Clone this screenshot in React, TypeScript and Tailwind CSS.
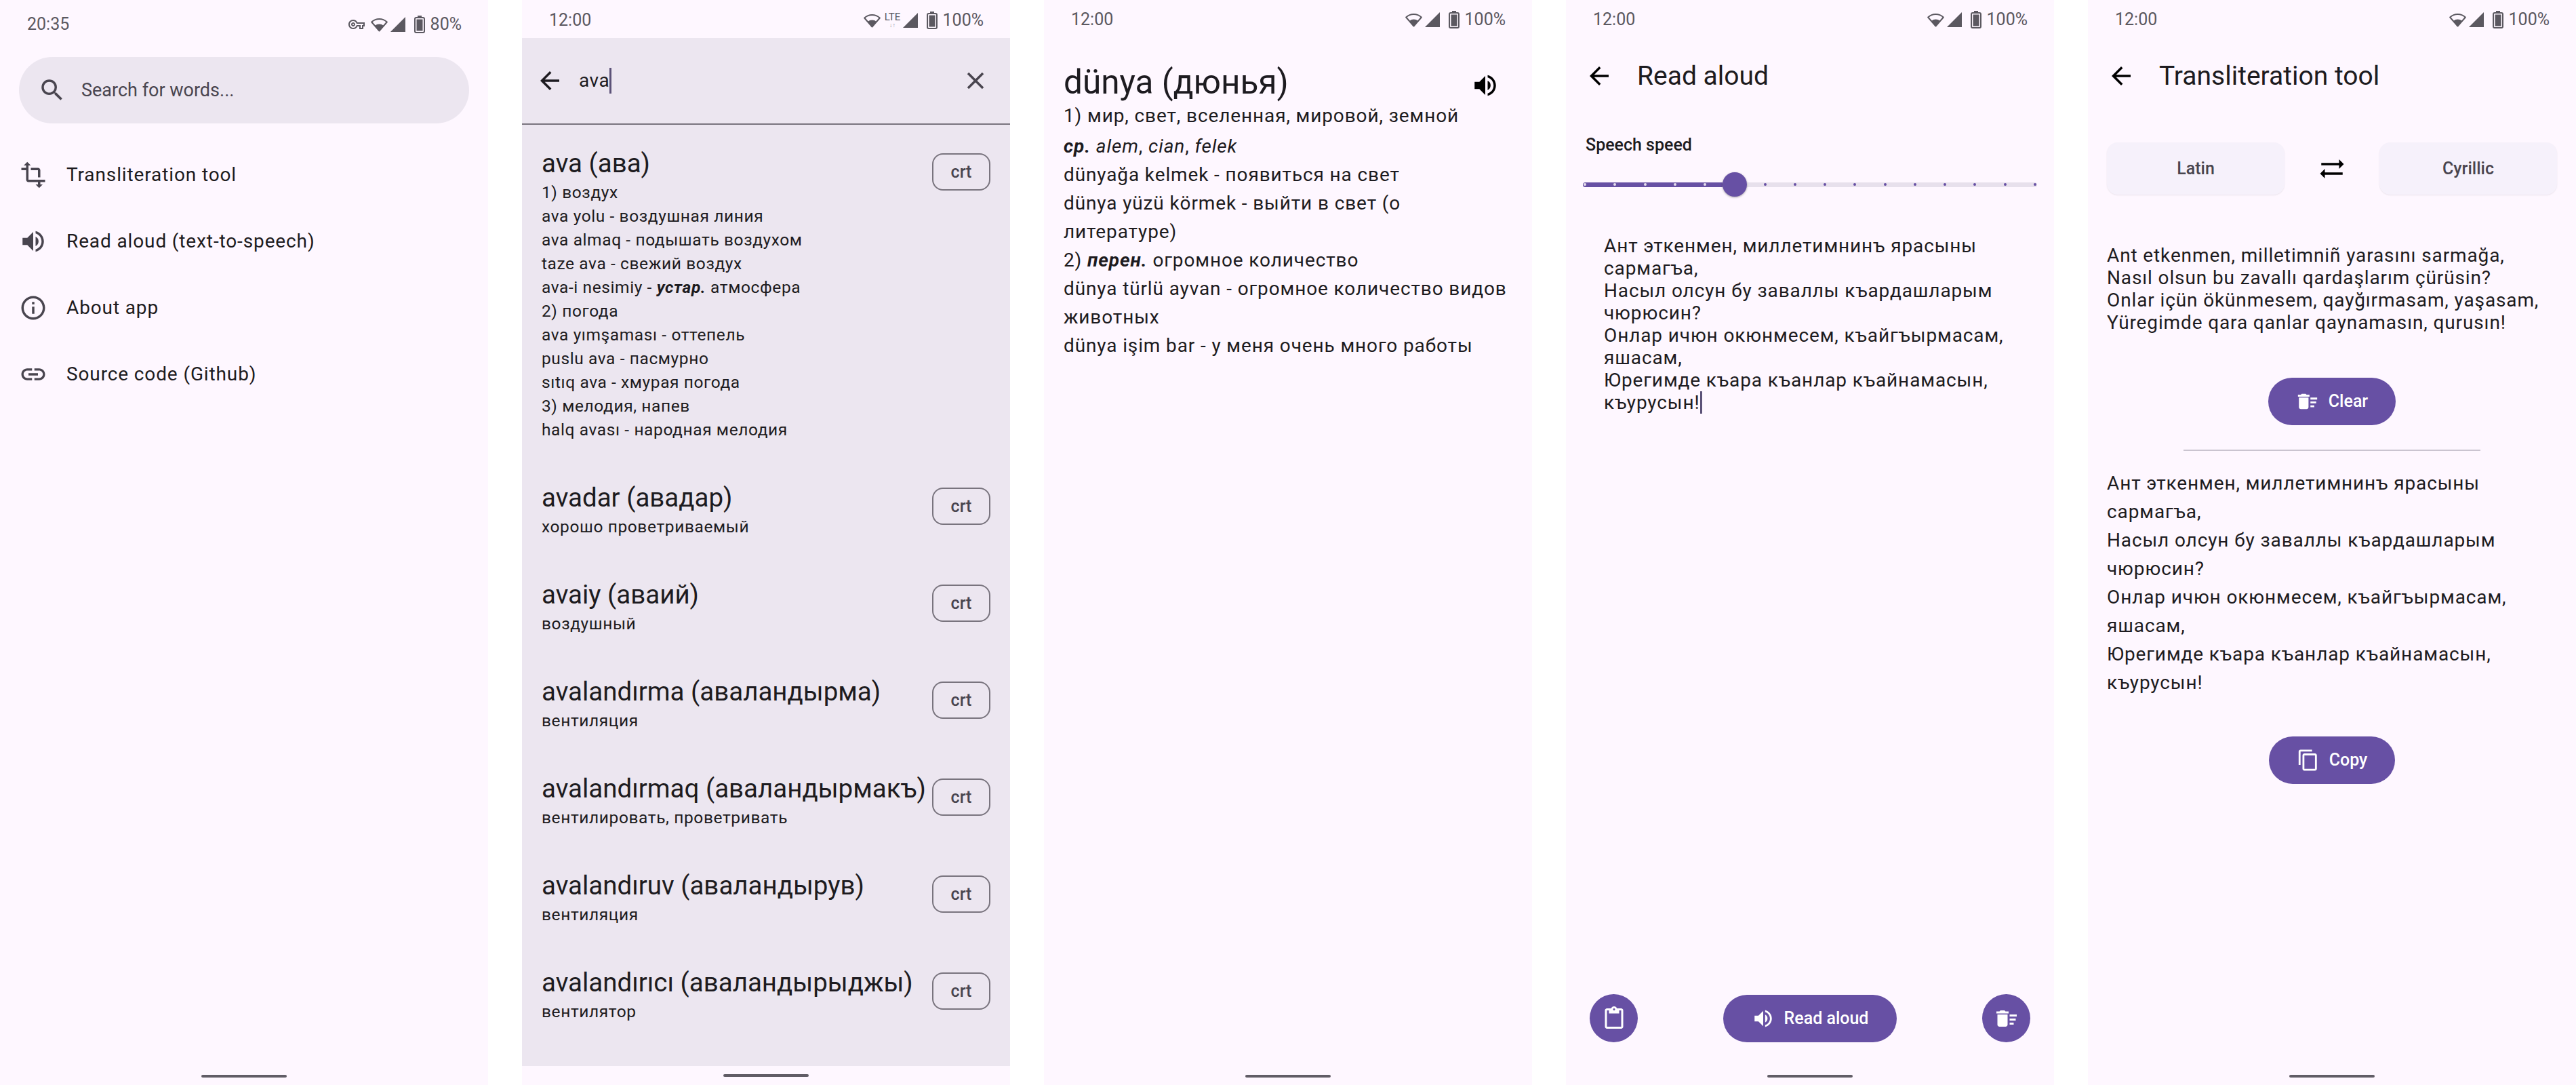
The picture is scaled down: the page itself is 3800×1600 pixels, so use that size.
import React, { ReactNode } from 'react';
import {
  MdArrowBack,
  MdClose,
  MdContentCopy,
  MdDeleteSweep,
  MdInfoOutline,
  MdLink,
  MdOutlineContentPaste,
  MdOutlineVpnKey,
  MdSearch,
  MdSyncAlt,
  MdTransform,
  MdVolumeUp,
} from 'react-icons/md';

function WifiIcon() {
  return (
    <svg width="25" height="22" viewBox="0 0 25 22" fill="none">
      <path d="M12.5 20.5 1.2 7.5a16.5 16.5 0 0 1 22.6 0Z" stroke="currentColor" strokeWidth="2" strokeLinejoin="round" />
      <path d="M12.5 20.5 6 13a10 10 0 0 1 13 0Z" fill="currentColor" />
    </svg>
  );
}

function SignalIcon() {
  return (
    <svg width="22" height="22" viewBox="0 0 22 22">
      <path d="M22 0v22H0Z" fill="currentColor" />
    </svg>
  );
}

function BatteryIcon() {
  return (
    <svg width="16" height="26" viewBox="0 0 16 26" fill="none">
      <path d="M5 0h6v2.5H5Z" fill="currentColor" />
      <rect x="1" y="3" width="14" height="22" rx="2" stroke="currentColor" strokeWidth="2" />
      <rect x="3.5" y="5.5" width="9" height="17" fill="currentColor" />
    </svg>
  );
}

function StatusBar({ time, battery, height, vpn, lte }: { time: string; battery: string; height: string; vpn?: boolean; lte?: boolean }) {
  return (
    <div className={`flex shrink-0 items-center justify-between bg-[#fef7ff] pl-[40px] pr-[39px] text-[25px] text-[#5b5860] ${height}`}>
      <span>{time}</span>
      <div className="flex items-center">
        {vpn && <MdOutlineVpnKey className="mr-[9px] text-[24px]" />}
        <WifiIcon />
        {lte && (
          <div className="ml-[5px] -mr-[2px] flex w-[26px] flex-col items-center text-[15px] leading-[15px]">
            <span>LTE</span>
            <span className="text-[9px] leading-[8px] text-[#9a979f]">↓↑</span>
          </div>
        )}
        <span className="ml-[4px] flex">
          <SignalIcon />
        </span>
        <span className="ml-[13px] flex">
          <BatteryIcon />
        </span>
        <span className="ml-[8px]">{battery}</span>
      </div>
    </div>
  );
}

function HomeBar({ height }: { height: string }) {
  return (
    <div className={`flex shrink-0 items-center justify-center ${height}`}>
      <div className="h-[4px] w-[126px] rounded-full bg-[#615d66]" />
    </div>
  );
}

function MenuRow({ icon, label }: { icon: ReactNode; label: string }) {
  return (
    <div className="flex h-[98px] items-center pl-[28px] text-[28px] tracking-[0.875px] text-[#1d1b20]">
      <span className="flex w-[70px] text-[42px] text-[#49454f]">{icon}</span>
      {label}
    </div>
  );
}

function HomeScreen() {
  return (
    <div className="flex h-full w-[720px] shrink-0 flex-col bg-[#fef7ff]">
      <StatusBar time="20:35" battery="80%" height="h-[72px]" vpn />
      <div className="mx-[28px] mt-[12px] flex h-[98px] items-center rounded-full bg-[#ece6f0] pl-[28px] text-[#49454f]">
        <MdSearch className="text-[42px]" />
        <span className="ml-[22px] text-[27px]">Search for words...</span>
      </div>
      <div className="mt-[27px] flex flex-col">
        <MenuRow icon={<MdTransform />} label="Transliteration tool" />
        <MenuRow icon={<MdVolumeUp />} label="Read aloud (text-to-speech)" />
        <MenuRow icon={<MdInfoOutline />} label="About app" />
        <MenuRow icon={<MdLink />} label="Source code (Github)" />
      </div>
      <div className="flex-1" />
      <HomeBar height="h-[26px]" />
    </div>
  );
}

function ResultItem({ word, lines }: { word: string; lines: ReactNode[] }) {
  return (
    <div className="flex px-[29px] py-[29px]">
      <div className="min-w-0 flex-1 whitespace-nowrap text-[#1d1b20]">
        <div className="text-[38.5px] leading-[50px]">{word}</div>
        {lines.map((line, i) => (
          <div key={i} className="text-[24.5px] leading-[35px] tracking-[0.6px]">
            {line}
          </div>
        ))}
      </div>
      <div className="mt-[10px] flex h-[55px] w-[86px] shrink-0 items-center justify-center rounded-[16px] border-2 border-[#79747e] text-[25px] font-medium text-[#49454f]">
        crt
      </div>
    </div>
  );
}

function SearchScreen() {
  return (
    <div className="flex h-full w-[720px] shrink-0 flex-col bg-[#fef7ff]">
      <StatusBar time="12:00" battery="100%" height="h-[56px] pt-[3px]" lte />
      <div className="flex flex-1 flex-col bg-[#ece6f0]">
        <div className="flex h-[128px] shrink-0 items-center border-b-2 border-[#79747e] pl-[20px] pr-[30px] text-[#1d1b20]">
          <MdArrowBack className="text-[42px]" />
          <span className="ml-[22px] text-[28px] tracking-[0.5px]">ava</span>
          <span className="h-[38px] w-[3px] bg-[#5c5278]" />
          <div className="flex-1" />
          <MdClose className="text-[42px] text-[#49454f]" />
        </div>
        <div className="pt-[3px]">
          <ResultItem
            word="ava (ава)"
            lines={[
              '1) воздух',
              'ava yolu - воздушная линия',
              'ava almaq - подышать воздухом',
              'taze ava - свежий воздух',
              <>
                ava-i nesimiy - <b className="italic">устар.</b> атмосфера
              </>,
              '2) погода',
              'ava yımşaması - оттепель',
              'puslu ava - пасмурно',
              'sıtıq ava - хмурая погода',
              '3) мелодия, напев',
              'halq avası - народная мелодия',
            ]}
          />
          <ResultItem word="avadar (авадар)" lines={['хорошо проветриваемый']} />
          <ResultItem word="avaiy (аваий)" lines={['воздушный']} />
          <ResultItem word="avalandırma (аваландырма)" lines={['вентиляция']} />
          <ResultItem word="avalandırmaq (аваландырмакъ)" lines={['вентилировать, проветривать']} />
          <ResultItem word="avalandıruv (аваландырув)" lines={['вентиляция']} />
          <ResultItem word="avalandırıcı (аваландырыджы)" lines={['вентилятор']} />
        </div>
      </div>
      <HomeBar height="h-[28px]" />
    </div>
  );
}

function EntryScreen() {
  return (
    <div className="flex h-full w-[720px] shrink-0 flex-col bg-[#fef7ff]">
      <StatusBar time="12:00" battery="100%" height="h-[58px]" />
      <div className="mt-[34px] flex items-start px-[29px] text-[#1d1b20]">
        <div className="flex-1 text-[49.5px] leading-[58px]">dünya (дюнья)</div>
        <MdVolumeUp className="mr-[19px] mt-[13px] text-[42px] text-black" />
      </div>
      <div className="px-[29px] text-[28px] leading-[42px] tracking-[0.875px] text-[#1d1b20]">
        <div className="mb-[3px]">1) мир, свет, вселенная, мировой, земной</div>
        <div>
          <b className="italic">ср.</b> <i>alem</i>, <i>cian</i>, <i>felek</i>
        </div>
        <div>dünyağa kelmek - появиться на свет</div>
        <div>dünya yüzü körmek - выйти в свет (о литературе)</div>
        <div>
          2) <b className="italic">перен.</b> огромное количество
        </div>
        <div>dünya türlü ayvan - огромное количество видов животных</div>
        <div>dünya işim bar - у меня очень много работы</div>
      </div>
      <div className="flex-1" />
      <HomeBar height="h-[26px]" />
    </div>
  );
}

function AppHeader({ title }: { title: string }) {
  return (
    <div className="flex h-[108px] shrink-0 items-center pl-[28px] text-[#1d1b20]">
      <MdArrowBack className="text-[42px] text-black" />
      <span className="ml-[35px] text-[39px]">{title}</span>
    </div>
  );
}

function SpeedSlider() {
  const ticks = Array.from({ length: 16 }, (_, i) => i);
  return (
    <div className="relative mx-[25px] mt-[25px] flex h-[36px] items-center">
      <div className="h-[7px] w-[206px] rounded-l-full bg-[#6750a4]" />
      <div className="z-10 h-[36px] w-[36px] shrink-0 rounded-full bg-[#6750a4] shadow-[0_1px_3px_rgba(0,0,0,0.35)]" />
      <div className="h-[7px] flex-1 rounded-r-full bg-[#e7e0ec]" />
      <div className="absolute inset-x-[1px] top-1/2 flex -translate-y-1/2 justify-between">
        {ticks.map((i) => (
          <span key={i} className={`h-[4px] w-[4px] rounded-full ${i < 5 ? 'bg-[#e7e0ec]' : 'bg-[#6750a4]'}`} />
        ))}
      </div>
    </div>
  );
}

function PillButton({ icon, label, width }: { icon: ReactNode; label: string; width: string }) {
  return (
    <div className={`flex h-[70px] items-center justify-center gap-[14px] rounded-full bg-[#6750a4] text-[25px] font-medium text-white ${width}`}>
      <span className="flex text-[34px]">{icon}</span>
      {label}
    </div>
  );
}

function ReadAloudScreen() {
  return (
    <div className="flex h-full w-[720px] shrink-0 flex-col bg-[#fef7ff]">
      <StatusBar time="12:00" battery="100%" height="h-[58px]" />
      <AppHeader title="Read aloud" />
      <div className="mt-[33px] pl-[29px] text-[25px] font-medium leading-[30px] text-[#1d1b20]">Speech speed</div>
      <SpeedSlider />
      <div className="mt-[56px] w-[668px] pl-[56px] text-[28px] leading-[33px] tracking-[0.875px] text-[#1d1b20]">
        <div>Ант эткенмен, миллетимнинъ ярасыны сармагъа,</div>
        <div>Насыл олсун бу заваллы къардашларым чюрюсин?</div>
        <div>Онлар ичюн окюнмесем, къайгъырмасам, яшасам,</div>
        <div>
          Юрегимде къара къанлар къайнамасын, къурусын!
          <span className="inline-block h-[33px] w-[3px] bg-[#5c5278] align-top" />
        </div>
      </div>
      <div className="flex-1" />
      <div className="flex items-center justify-between px-[35px]">
        <div className="flex h-[71px] w-[71px] items-center justify-center rounded-full bg-[#6750a4] text-[36px] text-white">
          <MdOutlineContentPaste />
        </div>
        <PillButton icon={<MdVolumeUp />} label="Read aloud" width="w-[256px]" />
        <div className="flex h-[71px] w-[71px] items-center justify-center rounded-full bg-[#6750a4] text-[36px] text-white">
          <MdDeleteSweep />
        </div>
      </div>
      <div className="h-[37px] shrink-0" />
      <HomeBar height="h-[26px]" />
    </div>
  );
}

function ScriptCard({ label }: { label: string }) {
  return (
    <div className="flex h-[77px] w-[262px] items-center justify-center rounded-[16px] bg-[#f6f1fb] text-[25px] font-medium text-[#49454f] shadow-[0_1px_2px_rgba(0,0,0,0.08)]">
      {label}
    </div>
  );
}

function TransliterationScreen() {
  return (
    <div className="flex h-full w-[720px] shrink-0 flex-col bg-[#fef7ff]">
      <StatusBar time="12:00" battery="100%" height="h-[58px]" />
      <AppHeader title="Transliteration tool" />
      <div className="mt-[44px] flex items-center justify-between px-[28px]">
        <ScriptCard label="Latin" />
        <MdSyncAlt className="text-[42px] text-black" />
        <ScriptCard label="Cyrillic" />
      </div>
      <div className="mt-[73px] pl-[28px] text-[28px] leading-[33px] tracking-[0.875px] text-[#1d1b20]">
        <div>Ant etkenmen, milletimniñ yarasını sarmağa,</div>
        <div>Nasıl olsun bu zavallı qardaşlarım çürüsin?</div>
        <div>Onlar içün ökünmesem, qayğırmasam, yaşasam,</div>
        <div>Yüregimde qara qanlar qaynamasın, qurusın!</div>
      </div>
      <div className="mt-[65px] flex justify-center">
        <PillButton icon={<MdDeleteSweep />} label="Clear" width="w-[188px]" />
      </div>
      <div className="mx-auto mt-[36px] h-[2px] w-[438px] bg-[#cac4d0]" />
      <div className="mt-[27px] w-[640px] pl-[28px] text-[28px] leading-[42px] tracking-[0.875px] text-[#1d1b20]">
        <div>Ант эткенмен, миллетимнинъ ярасыны сармагъа,</div>
        <div>Насыл олсун бу заваллы къардашларым чюрюсин?</div>
        <div>Онлар ичюн окюнмесем, къайгъырмасам, яшасам,</div>
        <div>Юрегимде къара къанлар къайнамасын, къурусын!</div>
      </div>
      <div className="mt-[58px] flex justify-center">
        <PillButton icon={<MdContentCopy />} label="Copy" width="w-[186px]" />
      </div>
      <div className="flex-1" />
      <HomeBar height="h-[26px]" />
    </div>
  );
}

export default function App() {
  return (
    <div className="flex h-[1600px] w-[3800px] gap-[50px] bg-white font-['Roboto',sans-serif]">
      <HomeScreen />
      <SearchScreen />
      <EntryScreen />
      <ReadAloudScreen />
      <TransliterationScreen />
    </div>
  );
}
